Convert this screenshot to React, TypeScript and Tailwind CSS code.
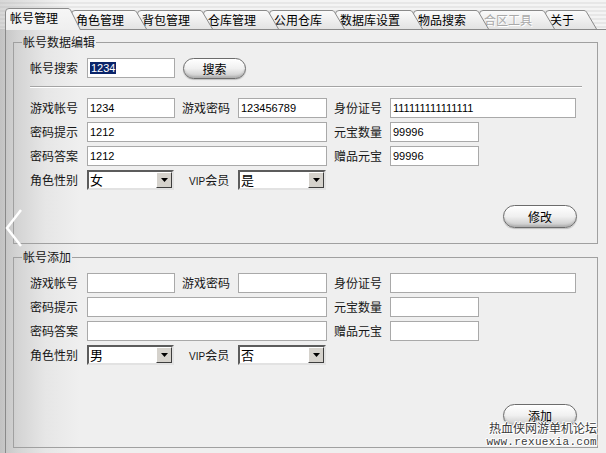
import clsx from 'clsx';
import type { ReactNode } from 'react';

const TABS = [
  { label: '帐号管理', active: true },
  { label: '角色管理' },
  { label: '背包管理' },
  { label: '仓库管理' },
  { label: '公用仓库' },
  { label: '数据库设置' },
  { label: '物品搜索' },
  { label: '合区工具', disabled: true },
  { label: '关于' },
];

// left tabs sit over the slant of the ones to their right
const TAB_Z = ['z-[9]', 'z-[8]', 'z-[7]', 'z-[6]', 'z-[5]', 'z-[4]', 'z-[3]', 'z-[2]', 'z-[1]'];

interface TabProps {
  label: string;
  index: number;
  active?: boolean;
  disabled?: boolean;
}

function Tab({ label, index, active, disabled }: TabProps) {
  const w = label.length * 12 + 28;
  const h = active ? 22 : 19;
  const gid = `tab-fill-${index}`;
  const outline = `M0.5 ${h} L0.5 4 Q0.5 0.5 4 0.5 L${w - 13} 0.5 Q${w - 11.5} 0.5 ${w - 10.5} 2 L${w - 0.5} ${h}`;
  return (
    <div
      className={clsx(
        'relative shrink-0',
        index > 0 && '-ml-[10px]',
        active ? 'z-20 -mb-px h-[22px]' : clsx('h-[19px]', TAB_Z[index]),
      )}
      style={{ width: w }}
    >
      <svg className="absolute inset-0" width={w} height={h}>
        <defs>
          <linearGradient id={gid} x1="0" y1="0" x2="0" y2="1">
            <stop offset="0" stopColor={active ? '#f6f6f6' : '#fbfbfb'} />
            <stop offset="1" stopColor={active ? '#efefef' : '#e3e3e3'} />
          </linearGradient>
        </defs>
        <path d={`${outline} Z`} fill={`url(#${gid})`} />
        <path d={outline} fill="none" stroke="#8a8a8a" />
      </svg>
      <span
        className={clsx(
          'relative block pl-[5px] text-[12px]',
          active ? 'leading-[20px]' : 'leading-[19px]',
          disabled ? 'text-[#a9a9a9] [text-shadow:1px_1px_0_#fff]' : 'text-black',
        )}
      >
        {label}
      </span>
    </div>
  );
}

function Label({ children, className }: { children: ReactNode; className?: string }) {
  return <div className={clsx('text-[12px] leading-[20px] text-[#161616]', className)}>{children}</div>;
}

function TextBox({ value, selected, className }: { value?: string; selected?: boolean; className?: string }) {
  return (
    <div
      className={clsx(
        'h-[20px] border border-[#a9a9a9] bg-white pl-[2px] text-[11px] leading-[18px] text-black [font-family:"Liberation_Sans",Arial,sans-serif]',
        className,
      )}
    >
      {selected ? <span className="bg-[#0a246a] px-px text-white">{value}</span> : value}
    </div>
  );
}

function ComboBox({ value, className }: { value: string; className?: string }) {
  return (
    <div
      className={clsx(
        'flex h-[20px] items-center border-2 border-t-[#5c5c5c] border-l-[#5c5c5c] border-r-[#e2e2e2] border-b-[#e2e2e2] bg-white',
        className,
      )}
    >
      <span className="flex-1 pl-px text-[13px] leading-[16px] text-black">{value}</span>
      <div className="flex h-[16px] w-[16px] items-center justify-center border border-t-white border-l-white border-r-[#3e3e3e] border-b-[#3e3e3e] bg-[#d5d2cc]">
        <svg width="7" height="4">
          <path d="M0 0h7L3.5 4z" fill="#000" />
        </svg>
      </div>
    </div>
  );
}

function PillButton({ children, className }: { children: ReactNode; className?: string }) {
  return (
    <button
      className={clsx(
        'rounded-full border border-[#6c6c6c] bg-linear-to-b from-white via-[#f0f0f0] to-[#c6c6c6] text-[12px] leading-none text-black shadow-[inset_0_-2px_2px_rgba(0,0,0,0.12),inset_0_1px_0_#fff,0_1px_1px_rgba(0,0,0,0.2)]',
        className,
      )}
    >
      {children}
    </button>
  );
}

interface AccountFields {
  account?: string;
  password?: string;
  idCard?: string;
  hint?: string;
  gold?: string;
  answer?: string;
  bonus?: string;
  gender: string;
  vip: string;
}

function AccountGrid({ f }: { f: AccountFields }) {
  return (
    <div className="grid grid-cols-[57px_88px_63px_89px_63px_186px] auto-rows-[20px] gap-y-[4px]">
      <Label>游戏帐号</Label>
      <TextBox value={f.account} />
      <Label className="pl-[7px]">游戏密码</Label>
      <TextBox value={f.password} />
      <Label className="pl-[7px]">身份证号</Label>
      <TextBox value={f.idCard} />

      <Label>密码提示</Label>
      <TextBox value={f.hint} className="col-span-3" />
      <Label className="pl-[7px]">元宝数量</Label>
      <TextBox value={f.gold} className="w-[89px]" />

      <Label>密码答案</Label>
      <TextBox value={f.answer} className="col-span-3" />
      <Label className="pl-[7px]">赠品元宝</Label>
      <TextBox value={f.bonus} className="w-[89px]" />

      <Label>角色性别</Label>
      <ComboBox value={f.gender} className="w-[87px]" />
      <Label className="pl-[14px]">
        <span className="text-[10px] [font-family:'Liberation_Sans',Arial,sans-serif]">VIP</span>会员
      </Label>
      <ComboBox value={f.vip} className="w-[88px]" />
    </div>
  );
}

function Group({ title, children, className }: { title: string; children: ReactNode; className?: string }) {
  return (
    <fieldset className={clsx('w-[585px] min-w-0 border border-[#a0a0a0]', className)}>
      <legend className="ml-[8px] px-px text-[12px] leading-[14px] text-[#161616]">{title}</legend>
      {children}
    </fieldset>
  );
}

export default function App() {
  return (
    <div className="relative h-[453px] w-[606px] overflow-hidden bg-[linear-gradient(90deg,#c2c2c2_0px,#d4d4d4_18px,#e6e6e6_45px,#efefef_80px)] [font-family:'Noto_Sans_CJK_SC','Noto_Sans',sans-serif]">
      {/* tab strip */}
      <div className="flex h-[29px] items-end bg-[linear-gradient(90deg,rgba(160,160,160,0.35)_0px,transparent_70px),repeating-linear-gradient(180deg,#f4f4f4_0px,#f4f4f4_2px,#e7e7e7_2px,#e7e7e7_4px)] pl-[5px]">
        {TABS.map((t, i) => (
          <Tab key={t.label} index={i} label={t.label} active={t.active} disabled={t.disabled} />
        ))}
      </div>

      {/* page body */}
      <div className="ml-[5px] h-[424px] border-t border-l border-[#8a8a8a] pt-[5px] pl-[7px]">
        <Group title="帐号数据编辑">
          <div className="pt-[9px] pr-[20px] pb-[15px] pl-[16px]">
            <div className="flex h-[21px] items-start">
              <Label className="w-[57px]">帐号搜索</Label>
              <TextBox value="1234" selected className="w-[88px]" />
              <PillButton className="ml-[8px] h-[21px] w-[63px]">搜索</PillButton>
            </div>
            <div className="-mr-[5px] mt-[7px] h-[2px] border-t border-b border-t-[#a4a4a4] border-b-white" />
            <div className="mt-[10px]">
              <AccountGrid
                f={{
                  account: '1234',
                  password: '123456789',
                  idCard: '111111111111111',
                  hint: '1212',
                  gold: '99996',
                  answer: '1212',
                  bonus: '99996',
                  gender: '女',
                  vip: '是',
                }}
              />
            </div>
            <div className="mt-[15px] flex justify-end">
              <PillButton className="h-[23px] w-[74px]">修改</PillButton>
            </div>
          </div>
        </Group>

        <Group title="帐号添加" className="mt-[6px]">
          <div className="pt-[9px] pr-[20px] pb-[20px] pl-[16px]">
            <AccountGrid f={{ gender: '男', vip: '否' }} />
            <div className="mt-[39px] flex justify-end">
              <PillButton className="h-[23px] w-[74px]">添加</PillButton>
            </div>
          </div>
        </Group>
      </div>

      {/* side scroll arrow */}
      <svg className="absolute top-[208px] left-[5px]" width="18" height="40">
        <polyline points="16,2 2,20 16,38" fill="none" stroke="#fff" strokeWidth="2.5" />
      </svg>

      {/* forum stamp */}
      <div className="absolute top-[420px] right-[9px] text-right [text-shadow:1px_0_#fff,-1px_0_#fff,0_1px_#fff,0_-1px_#fff,1px_1px_#fff,-1px_-1px_#fff]">
        <div className="text-[12px] leading-[16px] text-[#3a3a3a]">热血侠网游单机论坛</div>
        <div className="text-[11px] leading-[12px] tracking-[0.3px] text-[#3a3a3a] [font-family:'Liberation_Mono',monospace]">
          www.rexuexia.com
        </div>
      </div>
    </div>
  );
}
